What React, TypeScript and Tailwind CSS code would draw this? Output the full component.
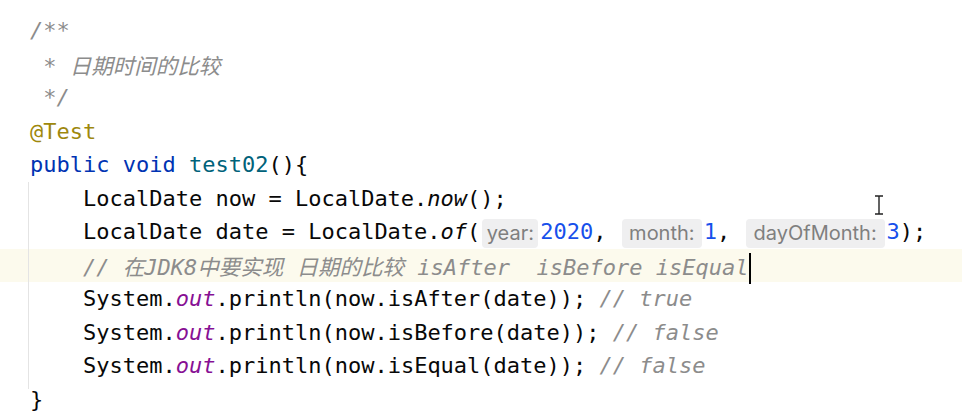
import React from "react";

const mono = { fontFamily: '"DejaVu Sans Mono", "Noto Sans CJK SC", monospace' };

const Kw = ({ children }: { children: React.ReactNode }) => (
  <span className="text-[#0033b3]">{children}</span>
);
const Cm = ({ children }: { children: React.ReactNode }) => (
  <span className="italic text-[#8c8c8c]">{children}</span>
);
const Num = ({ children }: { children: React.ReactNode }) => (
  <span className="text-[#1750eb]">{children}</span>
);
const Out = () => <span className="italic text-[#871094]">out</span>;
const Cjk = ({ children }: { children: React.ReactNode }) => (
  <span
    className="italic text-[#8c8c8c] text-[21.5px]"
    style={{ fontFamily: '"Noto Sans CJK SC", sans-serif' }}
  >
    {children}
  </span>
);

const Hint = ({ label, w }: { label: string; w: string }) => (
  <span
    className={`mx-[2px] inline-block h-[29px] rounded-[4px] bg-[#efeff0] text-center align-middle text-[20px] leading-[29px] text-[#7f7f7f] ${w}`}
    style={{ fontFamily: "Inter, sans-serif" }}
  >
    {label}
  </span>
);

const Line = ({
  children,
  active,
}: {
  children?: React.ReactNode;
  active?: boolean;
}) => (
  <div
    className={`h-[33.5px] whitespace-pre pl-[30px] leading-[33.5px] ${
      active ? "bg-[#fcfaed]" : ""
    }`}
  >
    {children}
  </div>
);

export default function App() {
  return (
    <div
      className="relative h-[418px] w-[962px] overflow-hidden bg-white pt-[14px] text-[22px] text-[#080808]"
      style={mono}
    >
      <Line>
        <Cm>/**</Cm>
      </Line>
      <Line>
        <Cm> * </Cm>
        <Cjk>日期时间的比较</Cjk>
      </Line>
      <Line>
        <Cm> */</Cm>
      </Line>
      <Line>
        <span className="text-[#9e880d]">@Test</span>
      </Line>
      <Line>
        <Kw>public</Kw> <Kw>void</Kw>{" "}
        <span className="text-[#00627a]">test02</span>(){"{"}
      </Line>

      <div className="relative">
        {/* indent guide */}
        <div className="absolute bottom-[-6px] left-[28px] top-0 w-px bg-[#e4e4e4]" />
        <Line>
          {"    "}LocalDate now = LocalDate.<span className="italic">now</span>();
        </Line>
        <Line>
          {"    "}LocalDate date = LocalDate.<span className="italic">of</span>(
          <Hint label="year:" w="w-[56px]" />
          <Num>2020</Num>, <Hint label="month:" w="w-[80px]" />
          <Num>1</Num>, <Hint label="dayOfMonth:" w="w-[139px]" />
          <Num>3</Num>);
        </Line>
        <Line active>
          {"    "}
          <Cm>// </Cm>
          <Cjk>在</Cjk>
          <Cm>JDK8</Cm>
          <Cjk>中要实现</Cjk>
          <Cm> </Cm>
          <Cjk>日期的比较</Cjk>
          <Cm> isAfter  isBefore isEqual</Cm>
          <span className="ml-[1px] inline-block h-[31px] w-[2px] bg-black align-middle" />
        </Line>
        <Line>
          {"    "}System.<Out />.println(now.isAfter(date)); <Cm>// true</Cm>
        </Line>
        <Line>
          {"    "}System.<Out />.println(now.isBefore(date)); <Cm>// false</Cm>
        </Line>
        <Line>
          {"    "}System.<Out />.println(now.isEqual(date)); <Cm>// false</Cm>
        </Line>
      </div>
      <Line>{"}"}</Line>

      {/* mouse I-beam cursor */}
      <svg
        className="absolute left-[873px] top-[194px]"
        width="12"
        height="22"
        viewBox="0 0 12 22"
        fill="none"
        stroke="#222"
        strokeWidth="1.4"
      >
        <path d="M2 2h3.5c0.6 0 0.5 0.5 0.5 1v16c0 0.5 0.1 1-0.5 1H2M10 2H6.5c-0.6 0-0.5 0.5-0.5 1M10 20H6.5c-0.6 0-0.5-0.5-0.5-1" />
      </svg>
    </div>
  );
}
